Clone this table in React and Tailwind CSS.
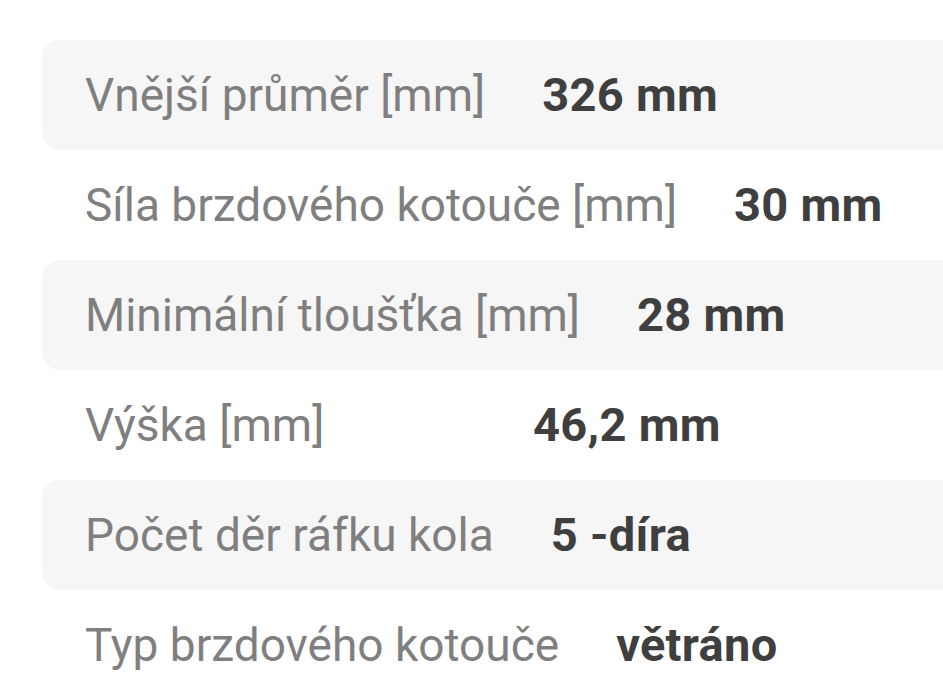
import React from 'react';

const specs = [
  { label: 'Vnější průměr [mm]', value: '326 mm' },
  { label: 'Síla brzdového kotouče [mm]', value: '30 mm' },
  { label: 'Minimální tloušťka [mm]', value: '28 mm' },
  { label: 'Výška [mm]', value: '46,2 mm' },
  { label: 'Počet děr ráfku kola', value: '5 -díra' },
  { label: 'Typ brzdového kotouče', value: 'větráno' },
];

export default function App() {
  return (
    <div className="min-h-screen bg-white pt-[40px] pl-[42px] overflow-hidden" style={{ fontFamily: 'Roboto, "Noto Sans", sans-serif' }}>
      {specs.map((row, i) => (
        <div
          key={row.label}
          className={`flex items-center h-[110px] pl-[43px] rounded-l-[18px] ${i % 2 === 0 ? 'bg-[#f6f6f6]' : 'bg-white'}`}
        >
          <span className="min-w-[448px] pr-[57px] text-[46px] text-[#7f7f7f] whitespace-nowrap">{row.label}</span>
          <span className="text-[47px] font-bold tracking-[0.3px] text-[#3f3f3f] whitespace-nowrap">{row.value}</span>
        </div>
      ))}
    </div>
  );
}
